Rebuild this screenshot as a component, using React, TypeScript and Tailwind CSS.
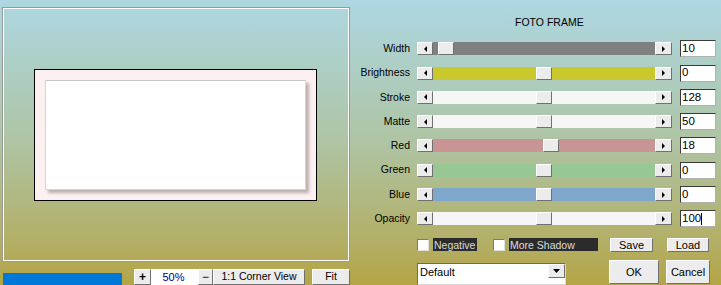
import React from "react";

type SliderRow = {
  label: string;
  track: string;
  value: string;
  thumb: number; // thumb offset inside the track, px
  caret?: boolean;
};

const ROWS: SliderRow[] = [
  { label: "Width", track: "bg-[#808080]", value: "10", thumb: 5 },
  { label: "Brightness", track: "bg-[#c9c92d]", value: "0", thumb: 103 },
  { label: "Stroke", track: "bg-[#f6f6f6]", value: "128", thumb: 103 },
  { label: "Matte", track: "bg-[#f6f6f6]", value: "50", thumb: 103 },
  { label: "Red", track: "bg-[#c99494]", value: "18", thumb: 110 },
  { label: "Green", track: "bg-[#97c795]", value: "0", thumb: 103 },
  { label: "Blue", track: "bg-[#7fa7cb]", value: "0", thumb: 103 },
  { label: "Opacity", track: "bg-[#f6f6f6]", value: "100", thumb: 103, caret: true },
];

const bevel =
  "bg-[#ececec] border border-t-white border-l-white border-r-[#707070] border-b-[#707070]";

function Arrow({ dir }: { dir: "left" | "right" | "down" }) {
  const pts =
    dir === "left" ? "4,0 4,6 1,3" : dir === "right" ? "1,0 1,6 4,3" : "0,1 7,1 3.5,5";
  return (
    <svg width={dir === "down" ? 7 : 5} height={6} viewBox={dir === "down" ? "0 0 7 6" : "0 0 5 6"}>
      <polygon points={pts} fill="#000" />
    </svg>
  );
}

function Slider({ row }: { row: SliderRow }) {
  return (
    <div className="flex items-center h-[24.4px]">
      <div className="w-[58px] text-right text-black">{row.label}</div>
      <div className={`ml-[7px] w-[16px] h-[13px] flex items-center justify-center ${bevel}`}>
        <Arrow dir="left" />
      </div>
      <div className={`relative w-[222px] h-[13px] ${row.track}`}>
        <div
          className={`absolute top-0 w-[16px] h-[13px] ${bevel} bg-[#ebebeb]`}
          style={{ left: row.thumb }}
        />
      </div>
      <div className={`w-[17px] h-[13px] flex items-center justify-center ${bevel}`}>
        <Arrow dir="right" />
      </div>
      <div className="ml-[8px] w-[36px] h-[17px] bg-white border border-t-[#3a3a3a] border-l-[#3a3a3a] border-r-[#b0b0b0] border-b-[#b0b0b0] flex items-center pl-[1px] text-[11.5px] text-black leading-none">
        {row.value}
        {row.caret && <span className="w-px h-[12px] bg-black" />}
      </div>
    </div>
  );
}

function Check({ label, width }: { label: string; width: string }) {
  return (
    <div className="flex items-center">
      <div className="w-[12px] h-[12px] bg-white border border-t-[#7a7a7a] border-l-[#7a7a7a] border-r-[#e0e0e0] border-b-[#e0e0e0]" />
      <div className={`ml-[4px] h-[13px] ${width} bg-[#2b2b2b] text-[#dcdcdc] flex items-center pl-[1px] leading-none`}>
        {label}
      </div>
    </div>
  );
}

export default function App() {
  return (
    <div className="w-[721px] h-[285px] overflow-hidden flex bg-gradient-to-b from-[#add7e2] via-[#aec4a3] to-[#b4a545] font-['Liberation_Sans',Arial,sans-serif] text-[10.5px]">
      {/* preview + zoom bar */}
      <div className="w-[352px] pl-[2px] pt-[7px] shrink-0">
        <div className="w-[348px] h-[255px] border border-[#9a9a9a]">
          <div className="w-full h-full border border-white pl-[30px] pt-[60px]">
            <div className="w-[283px] h-[132px] bg-[#fdf0f0] border border-black pl-[10px] pt-[10px]">
              <div className="w-[261px] h-[110px] bg-white border border-t-[#c8c8c8] border-l-[#d4d4d4] border-r-[#ddd6d6] border-b-[#d8d2d2] shadow-[3px_3px_3px_rgba(110,95,95,0.45)]" />
            </div>
          </div>
        </div>
        <div className="mt-[7px] flex items-start pl-[1px]">
          <div className="mt-[4px] w-[119px] h-[14px] bg-[#0078d7]" />
          <div className={`ml-[12px] w-[17px] h-[16px] flex items-center justify-center font-bold text-[12px] leading-none ${bevel}`}>
            +
          </div>
          <div className="w-[47px] h-[16px] bg-white text-[#000080] text-[11px] flex items-center justify-center pr-[2px]">
            50%
          </div>
          <div className={`w-[15px] h-[16px] flex items-center justify-center text-[12px] leading-none ${bevel}`}>
            −
          </div>
          <div className={`w-[92px] h-[16px] flex items-center justify-center ${bevel}`}>
            1:1 Corner View
          </div>
          <div className={`ml-[7px] w-[38px] h-[16px] flex items-center justify-center ${bevel}`}>
            Fit
          </div>
        </div>
      </div>

      {/* controls */}
      <div className="flex-1 flex flex-col">
        <div className="h-[36.8px] pl-[163px] pt-[17px] leading-none text-black">FOTO FRAME</div>
        {ROWS.map((r) => (
          <Slider key={r.label} row={r} />
        ))}
        <div className="mt-[7px] flex items-center h-[14px] pl-[65px]">
          <Check label="Negative" width="w-[44px]" />
          <div className="ml-[16px]">
            <Check label="More Shadow" width="w-[89px]" />
          </div>
          <div className={`ml-[12px] w-[43px] h-[14px] flex items-center justify-center text-[11px] ${bevel}`}>Save</div>
          <div className={`ml-[14px] w-[42px] h-[14px] flex items-center justify-center text-[11px] ${bevel}`}>Load</div>
        </div>
        <div className="mt-[8px] flex items-start pl-[65px]">
          <div className="mt-[3px] w-[149px] h-[22px] bg-white border border-t-[#6a6a6a] border-l-[#6a6a6a] border-r-[#d8d8d8] border-b-[#d8d8d8] flex items-start">
            <div className="flex-1 pl-[2px] pt-[3px] text-[11px] leading-none">Default</div>
            <div className={`w-[17px] h-[14px] flex items-center justify-center ${bevel}`}>
              <Arrow dir="down" />
            </div>
          </div>
          <div className={`ml-[43px] w-[50px] h-[24px] flex items-start pt-[3px] justify-center text-[11px] ${bevel}`}>OK</div>
          <div className={`ml-[7px] w-[44px] h-[24px] flex items-start pt-[3px] justify-center text-[11px] ${bevel}`}>Cancel</div>
        </div>
      </div>
    </div>
  );
}
